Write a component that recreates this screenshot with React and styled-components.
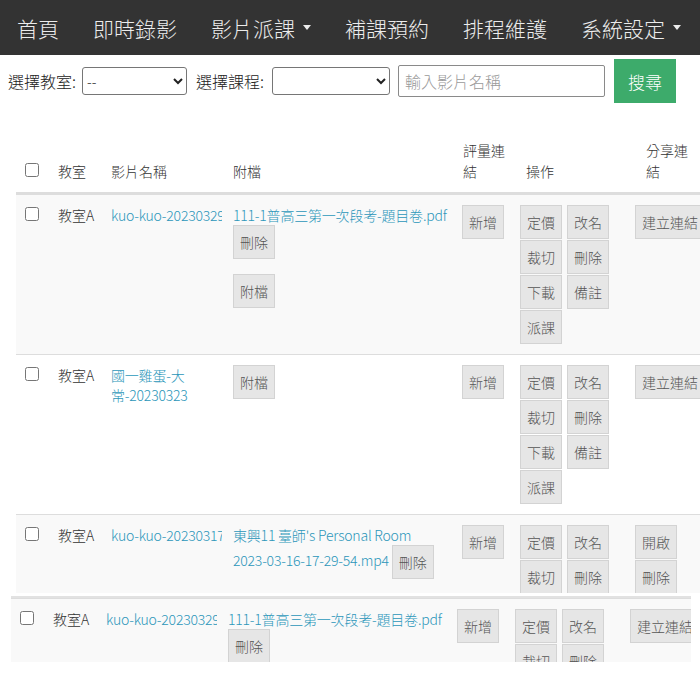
import React from 'react';
import styled, { createGlobalStyle } from 'styled-components';

const GlobalStyle = createGlobalStyle`
  body {
    margin: 0;
    background: #fff;
    overflow: hidden;
    font-family: "Noto Sans CJK TC", "Liberation Sans", sans-serif;
    font-weight: 300;
    color: #333;
  }
  button, input, select { font-weight: 300; }
`;

const COLS = '34px 53px 122px 230px 57px 115px 80px';

const Page = styled.div`
  position: relative;
  width: 700px;
  height: 700px;
  overflow: hidden;
`;

const NavBar = styled.nav`
  display: flex;
  align-items: center;
  height: 55px;
  background: #333;
`;

const NavItem = styled.a`
  display: flex;
  align-items: center;
  padding: 0 17px;
  font-size: 21px;
  line-height: 28px;
  color: #ececec;
  white-space: nowrap;
`;

const Caret = styled.span`
  display: inline-block;
  margin-left: 8px;
  border-top: 5px solid #ececec;
  border-left: 4px solid transparent;
  border-right: 4px solid transparent;
`;

const SearchBar = styled.div`
  display: flex;
  align-items: center;
  height: 44px;
  padding: 4px 8px 0;
`;

const Label = styled.label`
  width: ${p => p.$w}px;
  font-size: 16px;
  color: #222;
  margin-right: 4px;
  white-space: nowrap;
`;

const Select = styled.select`
  width: ${p => p.$w}px;
  height: 28px;
  margin-right: ${p => p.$mr}px;
  border: 1px solid #767676;
  border-radius: 3px;
  background: #fff;
  font-size: 14px;
  font-family: "Noto Sans CJK TC", sans-serif;
  color: #222;
`;

const SearchInput = styled.input`
  width: 207px;
  height: 32px;
  box-sizing: border-box;
  margin: 0 9px 0 0;
  padding: 0 6px;
  border: 1px solid #8a8a8a;
  border-radius: 2px;
  font-size: 16px;
  font-family: "Noto Sans CJK TC", sans-serif;
  &::placeholder { color: #9a9a9a; }
`;

const SearchBtn = styled.button`
  width: 62px;
  height: 44px;
  border: none;
  background: #3dab6b;
  color: #fff;
  font-size: 17px;
  font-family: "Noto Sans CJK TC", sans-serif;
`;

const Table = styled.div`
  margin: 29px 0 0 16px;
  width: 691px;
`;

const HeadRow = styled.div`
  display: grid;
  grid-template-columns: ${COLS};
  align-items: end;
  border-bottom: 2px solid #ddd;
`;

const HeadCell = styled.div`
  padding: 8px 4px 10px ${p => p.$pl || 8}px;
  font-size: 14px;
  line-height: 21px;
  & > span {
    display: block;
    max-width: ${p => (p.$wrap ? '44px' : 'none')};
  }
`;

const Body = styled.div`
  height: 399px;
  overflow: hidden;
`;

const Row = styled.div`
  display: grid;
  grid-template-columns: ${COLS};
  align-items: start;
  border-top: 1px solid #ddd;
  background: ${p => (p.$striped ? '#f9f9f9' : '#fff')};
  min-height: 159px;
`;

const Cell = styled.div`
  padding: 10px ${p => p.$pr ?? 8}px 10px ${p => p.$pl ?? 8}px;
  font-size: 14px;
  line-height: 20px;
  min-width: 0;
`;

const Check = styled.input.attrs({ type: 'checkbox' })`
  width: 14px;
  height: 14px;
  margin: ${p => p.$m || '1px 0 0 0'};
  accent-color: #999;
`;

const NameLink = styled.a`
  display: block;
  color: #2b96b9;
  white-space: nowrap;
  overflow: hidden;
  letter-spacing: -0.2px;
`;

const FileLink = styled.a`
  color: #2b96b9;
  letter-spacing: -0.2px;
`;

const Piece = styled.span`
  white-space: nowrap;
`;

const Btn = styled.button`
  display: inline-block;
  vertical-align: middle;
  height: 34px;
  padding: 6px 6px;
  font-size: 14px;
  line-height: 20px;
  font-family: "Noto Sans CJK TC", sans-serif;
  color: #555;
  background: #e6e6e6;
  border: 1px solid #d3d3d3;
  border-radius: 0;
  white-space: nowrap;
`;

const BlockBtn = styled(Btn)`
  display: block;
  margin-top: ${p => p.$mt || 0}px;
`;

const OpsGrid = styled.div`
  display: flex;
  gap: 5px;
  align-items: flex-start;
`;

const Stack = styled.div`
  display: flex;
  flex-direction: column;
  align-items: flex-start;
  gap: 1px;
`;

const Ghost = styled.div`
  position: absolute;
  top: 596px;
  left: 11px;
  width: 680px;
  height: 64px;
  overflow: hidden;
  border-top: 2px solid #e2e2e2;
  background: #f9f9f9;
`;

const rows = [
  {
    striped: true,
    name: 'kuo-kuo-20230329',
    attach: (
      <>
        <FileLink><Piece>111-1普高三第一次段考-題目卷.pdf</Piece></FileLink>{' '}
        <Btn>刪除</Btn>
        <BlockBtn $mt={15}>附檔</BlockBtn>
      </>
    ),
    share: ['建立連結'],
  },
  {
    striped: false,
    name: (
      <>
        國一雞蛋-大
        <br />
        常-20230323
      </>
    ),
    attach: <BlockBtn>附檔</BlockBtn>,
    share: ['建立連結'],
  },
  {
    striped: true,
    name: 'kuo-kuo-20230317',
    attach: (
      <>
        <FileLink>
          <Piece>東興11 臺師's Personal Room</Piece>{' '}
          <Piece>2023-03-16-17-29-54.mp4</Piece>
        </FileLink>{' '}
        <Btn>刪除</Btn>
      </>
    ),
    share: ['開啟', '刪除'],
  },
];

const ops = [
  ['定價', '裁切', '下載', '派課'],
  ['改名', '刪除', '備註'],
];

function VideoRow({ row }) {
  return (
    <Row $striped={row.striped}>
      <Cell $pl={9}><Check /></Cell>
      <Cell>教室A</Cell>
      <Cell $pr={3}><NameLink>{row.name}</NameLink></Cell>
      <Cell>{row.attach}</Cell>
      <Cell $pl={7}><Btn>新增</Btn></Cell>
      <Cell>
        <OpsGrid>
          {ops.map((col, i) => (
            <Stack key={i}>
              {col.map(t => <Btn key={t}>{t}</Btn>)}
            </Stack>
          ))}
        </OpsGrid>
      </Cell>
      <Cell $pr={0}>
        <Stack>
          {row.share.map(t => <Btn key={t}>{t}</Btn>)}
        </Stack>
      </Cell>
    </Row>
  );
}

export default function App() {
  return (
    <Page>
      <GlobalStyle />
      <NavBar>
        <NavItem>首頁</NavItem>
        <NavItem>即時錄影</NavItem>
        <NavItem>影片派課<Caret /></NavItem>
        <NavItem>補課預約</NavItem>
        <NavItem>排程維護</NavItem>
        <NavItem>系統設定<Caret /></NavItem>
      </NavBar>

      <SearchBar>
        <Label $w={70}>選擇教室:</Label>
        <Select $w={105} $mr={9}><option>--</option></Select>
        <Label $w={72}>選擇課程:</Label>
        <Select $w={118} $mr={8}><option></option></Select>
        <SearchInput placeholder="輸入影片名稱" />
        <SearchBtn>搜尋</SearchBtn>
      </SearchBar>

      <Table>
        <HeadRow>
          <HeadCell $pl={9}><Check $m="0 0 5px 0" /></HeadCell>
          <HeadCell>教室</HeadCell>
          <HeadCell>影片名稱</HeadCell>
          <HeadCell>附檔</HeadCell>
          <HeadCell $wrap><span>評量連結</span></HeadCell>
          <HeadCell $pl={14}>操作</HeadCell>
          <HeadCell $pl={19} $wrap><span>分享連結</span></HeadCell>
        </HeadRow>
        <Body>
          {rows.map((r, i) => <VideoRow key={i} row={r} />)}
        </Body>
      </Table>

      <Ghost>
        <VideoRow row={rows[0]} />
      </Ghost>
    </Page>
  );
}
